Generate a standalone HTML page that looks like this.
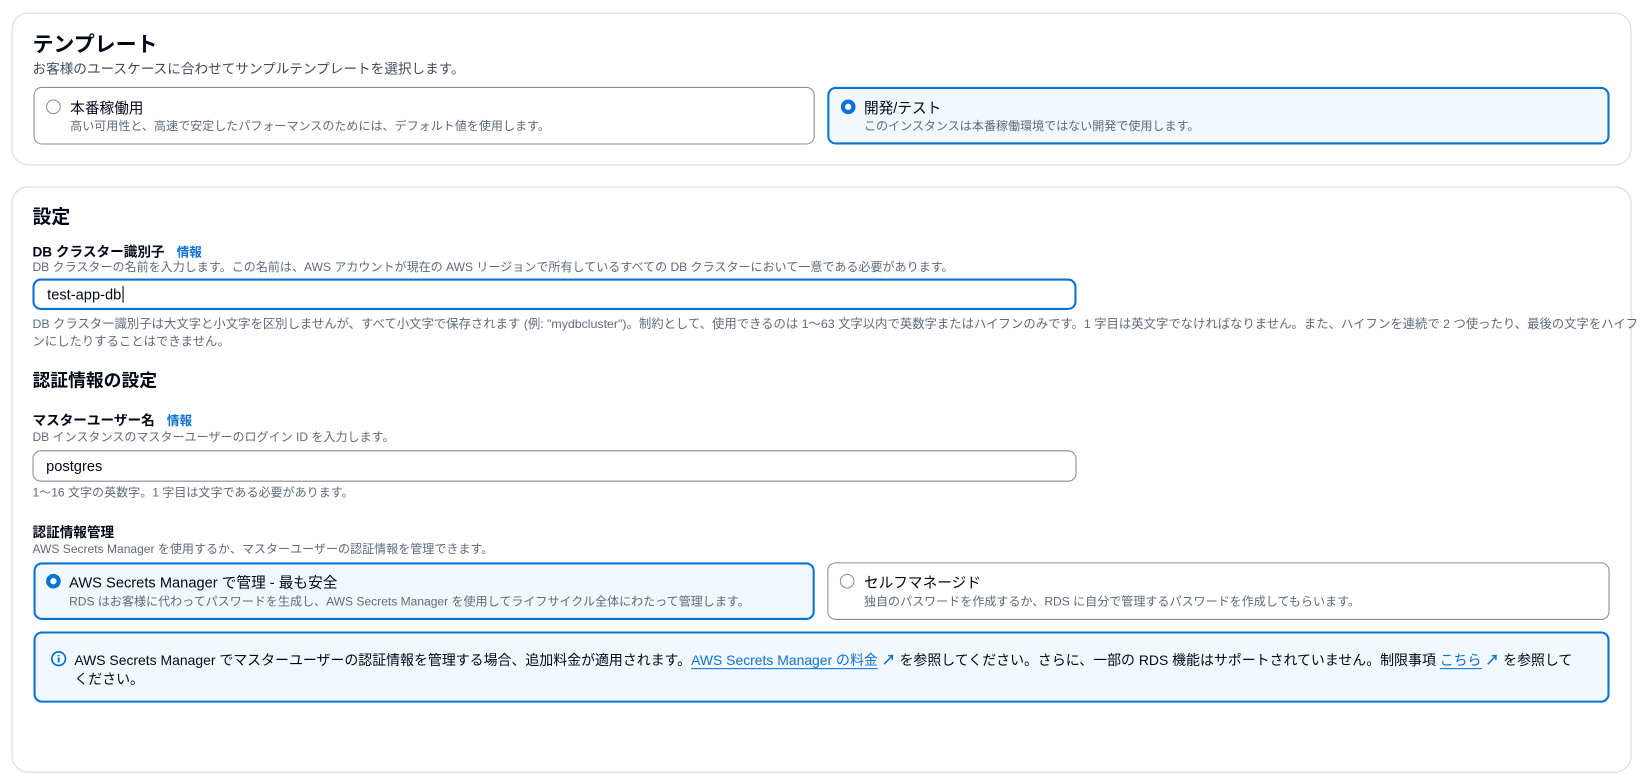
<!DOCTYPE html><html><head><meta charset="utf-8"><style>
*{box-sizing:border-box;margin:0;padding:0}
body{width:1642px;height:716px;overflow:hidden;background:#fff;font-family:"Liberation Sans","Noto Sans CJK JP",sans-serif;color:#000716;position:relative}
#w{position:absolute;left:0;top:0;width:1568px;height:684px;transform:scale(1.0472);transform-origin:0 0}
.a{position:absolute;white-space:nowrap}
.card{position:absolute;border:1px solid #d5d9dc;border-radius:16px;background:#fff}
.tile{position:absolute;border:1px solid #8c8c94;border-radius:8px;background:#fff}
.tile.sel{border:2px solid #0972d3;background:#f2f8fd}
.rad{position:absolute;width:14px;height:14px;border-radius:50%;border:1.5px solid #8c8c94;background:#fff}
.sel .rad{border:4px solid #0972d3}
.lb{font-size:14px;color:#000716}
.ds{font-size:11.5px;color:#5f6b7a}
.h{font-weight:bold}
.lk{color:#0972d3;font-weight:bold;font-size:12px}
.inp{position:absolute;border:1px solid #8c8c94;border-radius:8px;background:#fff;font-size:14px;padding-left:12px;line-height:28px}
.ul{color:#0972d3;border-bottom:1px solid #0972d3}
</style></head><body><div id="w">
<div class="card" style="left:11px;top:12px;width:1547px;height:146px"></div>
<div class="a h" style="left:31px;top:26px;font-size:20px">テンプレート</div>
<div class="a" style="left:31px;top:55px;font-size:13px;color:#414d5c">お客様のユースケースに合わせてサンプルテンプレートを選択します。</div>
<div class="tile" style="left:32px;top:83px;width:746px;height:55px"><div class="rad" style="left:11px;top:11px"></div>
<div class="a lb" style="left:34px;top:9px">本番稼働用</div><div class="a ds" style="left:34px;top:28px">高い可用性と、高速で安定したパフォーマンスのためには、デフォルト値を使用します。</div></div>
<div class="tile sel" style="left:790px;top:83px;width:747px;height:55px"><div class="rad" style="left:11px;top:10px"></div>
<div class="a lb" style="left:33px;top:8px">開発/テスト</div><div class="a ds" style="left:33px;top:27px">このインスタンスは本番稼働環境ではない開発で使用します。</div></div>

<div class="card" style="left:11px;top:178px;width:1547px;height:560px"></div>
<div class="a h" style="left:31px;top:193px;font-size:18px">設定</div>
<div class="a h" style="left:31px;top:230px;font-size:13px">DB クラスター識別子 <span class="lk" style="margin-left:8px">情報</span></div>
<div class="a ds" style="left:31px;top:247px;font-size:11.5px">DB クラスターの名前を入力します。この名前は、AWS アカウントが現在の AWS リージョンで所有しているすべての DB クラスターにおいて一意である必要があります。</div>
<div class="inp" style="left:31px;top:266px;width:997px;height:30px;border:2px solid #0972d3;line-height:26px">test-app-db<span style="border-left:1px solid #000;margin-left:1px"></span></div>
<div class="a ds" style="left:31px;top:300px;font-size:11.8px">DB クラスター識別子は大文字と小文字を区別しませんが、すべて小文字で保存されます (例: "mydbcluster")。制約として、使用できるのは 1～63 文字以内で英数字またはハイフンのみです。1 字目は英文字でなければなりません。また、ハイフンを連続で 2 つ使ったり、最後の文字をハイフ</div>
<div class="a ds" style="left:31px;top:317px;font-size:11.8px">ンにしたりすることはできません。</div>
<div class="a h" style="left:31px;top:349px;font-size:17px">認証情報の設定</div>
<div class="a h" style="left:31px;top:391px;font-size:13px">マスターユーザー名 <span class="lk" style="margin-left:8px">情報</span></div>
<div class="a ds" style="left:31px;top:409px;font-size:11.5px">DB インスタンスのマスターユーザーのログイン ID を入力します。</div>
<div class="inp" style="left:31px;top:430px;width:997px;height:30px">postgres</div>
<div class="a ds" style="left:31px;top:462px;font-size:11.5px">1～16 文字の英数字。1 字目は文字である必要があります。</div>
<div class="a h" style="left:31px;top:498px;font-size:13px">認証情報管理</div>
<div class="a ds" style="left:31px;top:516px;font-size:11.5px">AWS Secrets Manager を使用するか、マスターユーザーの認証情報を管理できます。</div>
<div class="tile sel" style="left:32px;top:537px;width:746px;height:55px"><div class="rad" style="left:10px;top:9px"></div>
<div class="a lb" style="left:32px;top:7px">AWS Secrets Manager で管理 - 最も安全</div><div class="a ds" style="left:32px;top:27px">RDS はお客様に代わってパスワードを生成し、AWS Secrets Manager を使用してライフサイクル全体にわたって管理します。</div></div>
<div class="tile" style="left:790px;top:537px;width:747px;height:55px"><div class="rad" style="left:11px;top:10px"></div>
<div class="a lb" style="left:34px;top:8px">セルフマネージド</div><div class="a ds" style="left:34px;top:28px">独自のパスワードを作成するか、RDS に自分で管理するパスワードを作成してもらいます。</div></div>
<div class="tile sel" style="left:32px;top:603px;width:1505px;height:68px"></div>
<svg class="a" style="left:48px;top:621px" width="16" height="16" viewBox="0 0 16 16"><circle cx="8" cy="8" r="6.5" fill="none" stroke="#0972d3" stroke-width="1.6"/><path d="M8 7v4.5M8 4.5v1.3" stroke="#0972d3" stroke-width="1.8"/></svg>
<div class="a" style="left:71px;top:620px;font-size:13.3px">AWS Secrets Manager でマスターユーザーの認証情報を管理する場合、追加料金が適用されます。<span class="ul">AWS Secrets Manager の料金</span> <span style="color:#0972d3;font-weight:bold">↗</span> を参照してください。さらに、一部の RDS 機能はサポートされていません。制限事項 <span class="ul">こちら</span> <span style="color:#0972d3;font-weight:bold">↗</span> を参照して</div>
<div class="a" style="left:71px;top:638px;font-size:13.3px">ください。</div>
</div></body></html>
